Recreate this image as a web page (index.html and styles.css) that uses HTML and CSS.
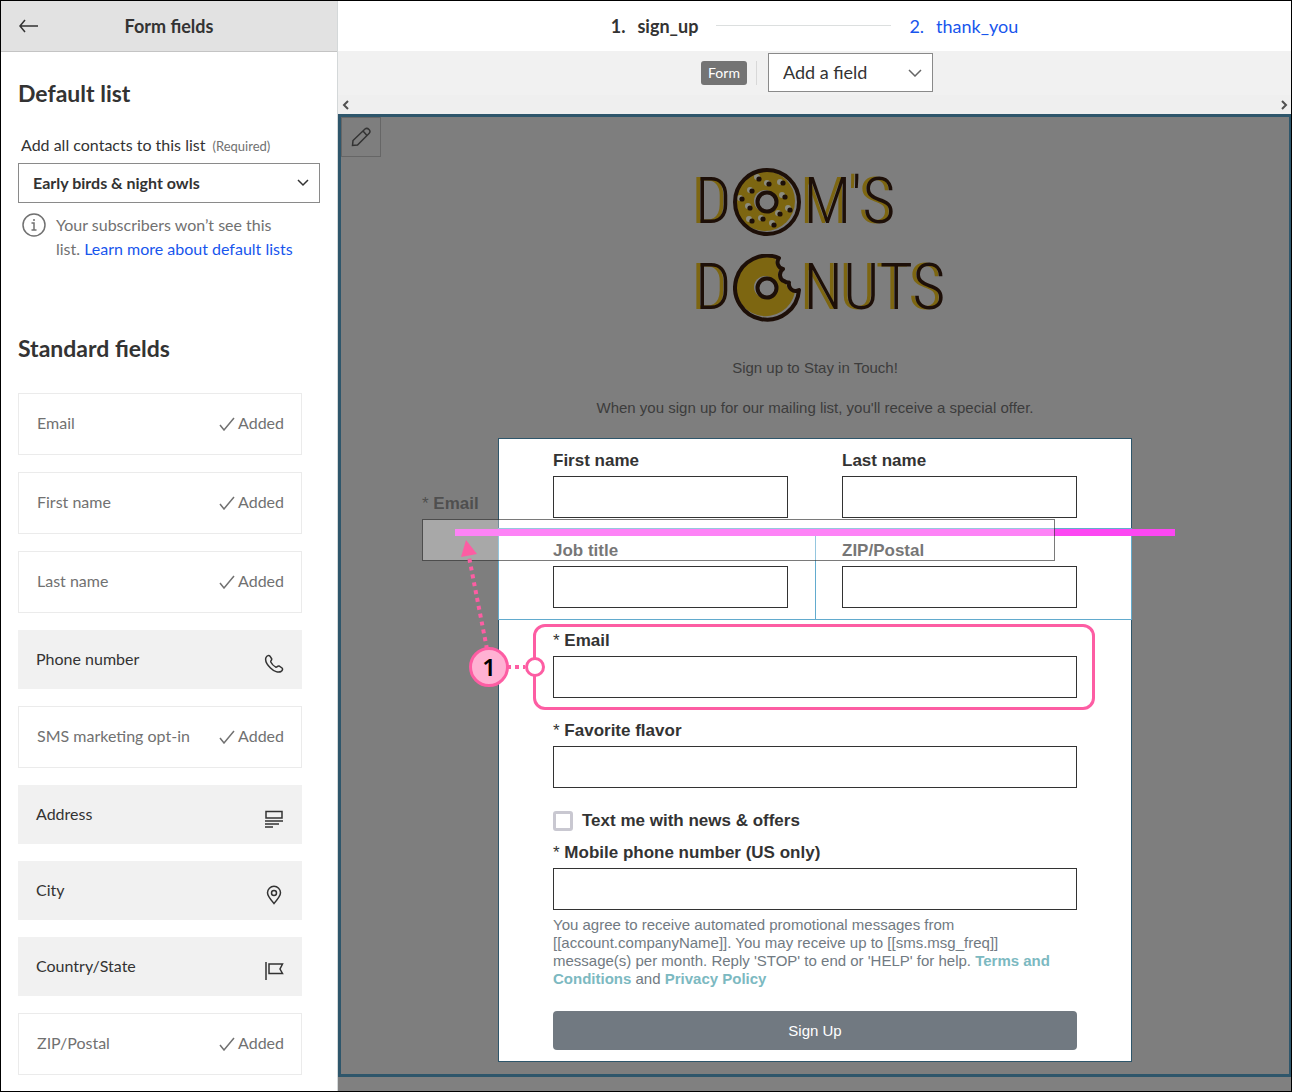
FILE: index.html
```html
<!DOCTYPE html>
<html lang="en">
<head>
    <meta charset="UTF-8">
    <meta name="viewport" content="width=device-width, initial-scale=1.0">
    <title>Form fields</title>
    <link rel="stylesheet" href="styles.css">
</head>
<body>
    <div class="app">
        <aside class="sidebar">
            <header class="sidebar-header">
                <button class="back" type="button" aria-label="Back">
                    <svg width="20" height="14" viewBox="0 0 20 14"><path d="M6 1L1 7l5 6M1 7h18"/></svg>
                </button>
                <h1>Form fields</h1>
            </header>

            <section class="default-list">
                <h2>Default list</h2>
                <label for="list">Add all contacts to this list <small>(Required)</small></label>
                <div class="select list-select">
                    <select id="list">
                        <option>Early birds &amp; night owls</option>
                    </select>
                    <svg width="12" height="8" viewBox="0 0 12 8"><path d="M1 1l5 5 5-5"/></svg>
                </div>
                <div class="info">
                    <svg width="24" height="24" viewBox="0 0 24 24"><circle cx="12" cy="12" r="11"/><path d="M9.500 10H12v7M9.500 17h5"/><circle class="dot" cx="12" cy="7" r="1"/></svg>
                    <p>Your subscribers won’t see this list. <a href="#">Learn more about default lists</a></p>
                </div>
            </section>

            <section class="standard">
                <h2>Standard fields</h2>
                <div class="cards">
                    <div class="card added"><span>Email</span><span class="status"><svg width="16" height="14" viewBox="0 0 16 14"><path d="M1 8l4 5L15 1"/></svg>Added</span></div>
                    <div class="card added"><span>First name</span><span class="status"><svg width="16" height="14" viewBox="0 0 16 14"><path d="M1 8l4 5L15 1"/></svg>Added</span></div>
                    <div class="card added"><span>Last name</span><span class="status"><svg width="16" height="14" viewBox="0 0 16 14"><path d="M1 8l4 5L15 1"/></svg>Added</span></div>
                    <button class="card" type="button">Phone number
                        <svg width="20" height="20" viewBox="0 0 20 20"><path d="M2 3.500C3 1.500 5 1 6 2.200L7.500 4.500C8.500 6 6.300 6.700 6.800 8C8 10.500 9.500 12 11.800 13.200C13 13.700 13.500 11.500 15 12L18 14C19 15 18.500 16.500 17 17.500C14.500 19 10 17.500 6.500 14C3 10.500 1 6 2 3.500Z"/></svg>
                    </button>
                    <div class="card added"><span>SMS marketing opt-in</span><span class="status"><svg width="16" height="14" viewBox="0 0 16 14"><path d="M1 8l4 5L15 1"/></svg>Added</span></div>
                    <button class="card" type="button">Address
                        <svg width="20" height="20" viewBox="0 0 20 20"><path d="M2 2.500h16v6.500H2zM1 12h18M1 15h14M1 18h8"/></svg>
                    </button>
                    <button class="card" type="button">City
                        <svg width="20" height="20" viewBox="0 0 20 20"><path d="M10 18.500C6 14 3.500 11 3.500 7.800a6.500 6.500 0 0 1 13 0C16.500 11 14 14 10 18.500z"/><circle cx="10" cy="8" r="2.500"/></svg>
                    </button>
                    <button class="card" type="button">Country/State
                        <svg width="20" height="20" viewBox="0 0 20 20"><path d="M2 1v18M5 3h13.500l-2.500 5 2.500 4.500H5z"/></svg>
                    </button>
                    <div class="card added"><span>ZIP/Postal</span><span class="status"><svg width="16" height="14" viewBox="0 0 16 14"><path d="M1 8l4 5L15 1"/></svg>Added</span></div>
                </div>
            </section>
        </aside>

        <main class="editor">
            <nav class="steps">
                <a class="current" href="#"><span>1.</span>sign_up</a>
                <span class="step-line"></span>
                <a href="#"><span>2.</span>thank_you</a>
            </nav>

            <div class="toolbar">
                <span class="tag">Form</span>
                <span class="divider"></span>
                <div class="select field-select">
                    <select aria-label="Add a field">
                        <option>Add a field</option>
                    </select>
                    <svg width="14" height="8" viewBox="0 0 14 8"><path d="M1 1l6 6 6-6"/></svg>
                </div>
            </div>
            <div class="scroller">
                <svg width="8" height="10" viewBox="0 0 8 10"><path d="M6 1L2 5l4 4"/></svg>
                <svg width="8" height="10" viewBox="0 0 8 10"><path d="M2 1l4 4-4 4"/></svg>
            </div>

            <div class="canvas">
                <button class="edit" type="button" aria-label="Edit">
                    <svg width="20" height="20" viewBox="0 0 20 20"><path d="M1.500 18.500L2 13.500 14 2Q16 .5 18 2.500T18 6.500L6.500 18zM12 4l4 4.500"/></svg>
                </button>

                <div class="page">
                    <div class="logo">
                        <div class="logo-row">
                            <span>D</span>
                            <svg width="68" height="68" viewBox="0 0 68 68">
                                <circle class="gap" cx="34" cy="34" r="32"/>
                                <circle class="dough" cx="32" cy="33" r="30"/>
                                <g class="light">
                                    <circle cx="24" cy="9" r="3"/><circle cx="34" cy="15" r="3"/><circle cx="47" cy="14" r="3"/><circle cx="17" cy="22" r="3"/><circle cx="49" cy="27" r="3"/><circle cx="7" cy="30" r="3"/><circle cx="15" cy="38" r="3"/><circle cx="55" cy="40" r="3"/><circle cx="45" cy="45" r="3"/><circle cx="16" cy="51" r="3"/><circle cx="28" cy="50" r="3"/><circle cx="39" cy="55" r="3"/>
                                </g>
                                <g class="sprinkle">
                                    <circle cx="26" cy="11" r="2.600"/><circle cx="36" cy="16" r="2.600"/><circle cx="50" cy="15" r="2.600"/><circle cx="19" cy="23" r="2.600"/><circle cx="52" cy="29" r="2.600"/><circle cx="9" cy="31" r="2.600"/><circle cx="17" cy="40" r="2.600"/><circle cx="57" cy="42" r="2.600"/><circle cx="47" cy="46" r="2.600"/><circle cx="19" cy="53" r="2.600"/><circle cx="30" cy="51" r="2.600"/><circle cx="41" cy="57" r="2.600"/>
                                </g>
                                <circle class="gap" cx="32" cy="33" r="11"/>
                                <circle class="ring" cx="34" cy="34" r="9.500"/>
                                <circle class="ring" cx="34" cy="34" r="32"/>
                            </svg>
                            <span>M'S</span>
                        </div>
                        <div class="logo-row">
                            <span>D</span>
                            <svg width="68" height="68" viewBox="0 0 68 68">
                                <path class="dough" d="M43 4C42 9 43 12 47 15C43 20 46 26 53 29C54 35 57 37 62 38A30 30 0 1 1 43 4z"/>
                                <circle class="gap" cx="32" cy="33" r="11"/>
                                <circle class="ring" cx="34" cy="34" r="9.500"/>
                                <path class="ring" d="M66 36A32 32 0 1 1 46 4C43 8 45 14 50 15C45 19 47 26 51 27Q54 29 56 28.500C55 34 60 39 66 36z"/>
                            </svg>
                            <span>NUTS</span>
                        </div>
                    </div>
                    <p class="intro">Sign up to Stay in Touch!</p>
                    <p class="intro">When you sign up for our mailing list, you'll receive a special offer.</p>

                    <form class="panel">
                        <div class="row">
                            <div class="field">
                                <label for="first">First name</label>
                                <input type="text" id="first">
                            </div>
                            <div class="field">
                                <label for="last">Last name</label>
                                <input type="text" id="last">
                            </div>
                        </div>
                        <div class="row target">
                            <div class="field">
                                <label for="job">Job title</label>
                                <input type="text" id="job">
                            </div>
                            <div class="field">
                                <label for="zip">ZIP/Postal</label>
                                <input type="text" id="zip">
                            </div>
                        </div>
                        <div class="field marked">
                            <label for="email"><i>*</i> Email</label>
                            <input type="email" id="email">
                            <span class="callout"></span>
                        </div>
                        <div class="field">
                            <label for="flavor"><i>*</i> Favorite flavor</label>
                            <input type="text" id="flavor">
                        </div>
                        <div class="check">
                            <input type="checkbox" id="sms">
                            <label for="sms">Text me with news &amp; offers</label>
                        </div>
                        <div class="field">
                            <label for="mobile"><i>*</i> Mobile phone number (US only)</label>
                            <input type="tel" id="mobile">
                            <p class="consent">You agree to receive automated promotional messages from [[account.companyName]]. You may receive up to [[sms.msg_freq]] message(s) per month. Reply 'STOP' to end or 'HELP' for help. <a href="#">Terms and Conditions</a> and <a href="#">Privacy Policy</a></p>
                        </div>
                        <button class="submit" type="button">Sign Up</button>

                        <!-- drop position and the field being dragged -->
                        <div class="drop-line"></div>
                        <div class="ghost">
                            <span><i>*</i> Email</span>
                            <div class="ghost-box"></div>
                        </div>

                        <!-- step marker -->
                        <svg class="pointer" width="90" height="160" viewBox="0 0 90 160">
                            <path class="dots" d="M32 110L14 18"/>
                            <path class="head" d="M11 1L6 18l16-3z"/>
                            <path class="dots" d="M52 128h18"/>
                            <circle class="end" cx="80" cy="128" r="8.500"/>
                        </svg>
                        <span class="marker">1</span>
                    </form>
                </div>
            </div>
        </main>
    </div>
</body>
</html>
```
FILE: styles.css
```css
* {
    margin: 0;
    padding: 0;
    box-sizing: border-box;
}

body {
    font-family: Lato, sans-serif;
    font-size: 16px;
    color: #333;
}

button, select, input {
    font: inherit;
    color: inherit;
}

svg {
    fill: none;
    stroke: #333;
    stroke-width: 1.5;
    flex: none;
}

a {
    color: #1856ed;
    text-decoration: none;
}

.app {
    display: grid;
    grid-template-columns: 337px 1fr;
    min-height: 100vh;
    border: 1px solid #000;
}

/* sidebar */
.sidebar {
    background: #fff;
    border-right: 1px solid #d4d8d9;
}

.sidebar-header {
    position: relative;
    display: flex;
    align-items: center;
    justify-content: center;
    height: 51px;
    background: #e2e2e2;
    border-bottom: 1px solid #c4c4c4;
}

.sidebar-header h1 {
    font-size: 18px;
    font-weight: 700;
}

.back {
    position: absolute;
    left: 18px;
    display: flex;
    background: none;
    border: none;
}

.default-list {
    padding: 27px 17px 0;
}

h2 {
    font-size: 23px;
    line-height: 28px;
    font-weight: 700;
}

.default-list label {
    display: block;
    margin: 26px 0 5px 3px;
    line-height: 24px;
}

.default-list small {
    font-size: 13px;
    color: #717171;
    margin-left: 3px;
}

.select {
    position: relative;
    display: flex;
    align-items: center;
}

.select select {
    width: 100%;
    height: 100%;
    padding: 0 14px 2px;
    appearance: none;
    background: #fff;
    border: 1px solid #8a8a8a;
    border-radius: 0;
}

.select svg {
    position: absolute;
    right: 11px;
    pointer-events: none;
}

.list-select {
    height: 40px;
    font-weight: 700;
}

.info {
    display: flex;
    gap: 10px;
    padding: 10px 26px 0 4px;
    line-height: 24px;
    color: #717171;
}

.info svg {
    stroke: #717171;
}

.info .dot {
    fill: #717171;
    stroke: none;
}

.standard {
    padding: 73px 35px 14px 17px;
}

.cards {
    display: flex;
    flex-direction: column;
    gap: 17px;
    margin-top: 31px;
}

.card {
    display: flex;
    align-items: center;
    justify-content: space-between;
    height: 59px;
    padding: 0 18px 2px;
    background: #f1f1f1;
    border: none;
}

.card > svg {
    margin-top: 10px;
}

.added {
    height: 62px;
    background: #fff;
    border: 1px solid #ebebeb;
    padding: 0 17px 4px 18px;
    color: #717171;
}

.status {
    display: flex;
    align-items: center;
    gap: 3px;
}

.status svg {
    stroke: #717171;
    margin-top: 4px;
}

/* editor */
.editor {
    display: flex;
    flex-direction: column;
    background: #808080;
}

.steps {
    display: flex;
    align-items: center;
    justify-content: center;
    gap: 18px;
    height: 50px;
    padding-bottom: 1px;
    background: #fff;
    font-size: 18px;
}

.steps a span {
    margin-right: 12px;
}

.steps .current {
    color: #333;
    font-weight: 700;
}

.step-line {
    width: 175px;
    height: 1px;
    background: #dcdfdf;
}

.toolbar {
    display: flex;
    align-items: center;
    justify-content: center;
    gap: 9px;
    height: 44px;
    padding: 0 0 1px 5px;
    background: #f1f1f1;
}

.tag {
    padding: 0 7px;
    font-size: 14px;
    line-height: 24px;
    color: #fff;
    background: #747474;
    border-radius: 3px;
}

.divider {
    width: 1px;
    height: 24px;
    background: #d8d8d8;
}

.field-select {
    width: 165px;
    height: 39px;
    margin-left: 2px;
    font-size: 18px;
}

.field-select svg {
    stroke: #666;
}

.scroller {
    display: flex;
    align-items: center;
    justify-content: space-between;
    height: 19px;
    padding: 0 3px 0 4px;
    background: #efefef;
}

.scroller svg {
    stroke: #505050;
    stroke-width: 2;
}

.canvas {
    position: relative;
    padding: 0 12px 12px;
    background: #7e7e7e;
    border: 3px solid #2e566b;
    border-right-width: 2px;
}

.edit {
    position: absolute;
    top: 0;
    left: 0;
    display: flex;
    align-items: center;
    justify-content: center;
    width: 40px;
    height: 40px;
    background: none;
    border: 1px solid #666;
}

.page {
    max-width: 634px;
    margin: 0 auto;
    font-family: "Liberation Sans", Arial, sans-serif;
}

.logo {
    display: flex;
    flex-direction: column;
    gap: 18px;
    width: 240px;
    margin: 0 auto;
    padding: 51px 0 36px;
}

.logo-row {
    display: flex;
    align-items: center;
    gap: 2px;
    height: 68px;
    font-family: "Liberation Sans Narrow", "Roboto Condensed", "DejaVu Sans Condensed", sans-serif;
    font-size: 64px;
    font-weight: 300;
    line-height: 68px;
    color: #1d0f08;
    text-shadow: -4px 0 #7d6611;
}

.logo .dough {
    fill: #7d6611;
    stroke: none;
}

.logo .gap {
    fill: #7e7e7e;
    stroke: none;
}

.logo .light {
    fill: #8c8c80;
    stroke: none;
}

.logo .sprinkle {
    fill: #1d0f08;
    stroke: none;
}

.logo .ring {
    stroke: #1d0f08;
    stroke-width: 4;
    stroke-linejoin: round;
}

.intro {
    margin-bottom: 20px;
    font-size: 15px;
    line-height: 20px;
    text-align: center;
    color: #3c3c3c;
}

.panel {
    position: relative;
    padding: 0 54px 11px;
    background: #fff;
    border: 1px solid #2e566b;
}

.row {
    display: grid;
    grid-template-columns: 1fr 1fr;
    gap: 54px;
}

.target {
    position: relative;
    margin: 0 -54px;
    padding: 0 54px;
    outline: 1px solid #62abce;
}

.target::before {
    content: "";
    position: absolute;
    top: 0;
    bottom: 0;
    left: 50%;
    width: 1px;
    background: #62abce;
}

.field {
    padding: 12px 0 11px;
}

.field label, .check label, .ghost {
    font-size: 17px;
    font-weight: 700;
    line-height: 20px;
}

.field label {
    display: block;
    margin-bottom: 5px;
}

i {
    font-style: normal;
    font-weight: 400;
}

.field input {
    display: block;
    width: 100%;
    height: 42px;
    padding: 0 10px;
    background: #fff;
    border: 1px solid #333;
}

.marked {
    position: relative;
}

.callout {
    position: absolute;
    top: 5px;
    right: -18px;
    bottom: -1px;
    left: -20px;
    border: 3px solid #fd5da3;
    border-radius: 12px;
    pointer-events: none;
}

.check {
    display: flex;
    align-items: center;
    gap: 9px;
    padding-top: 12px;
}

.check input {
    width: 20px;
    height: 20px;
    appearance: none;
    background: #fff;
    border: 3px solid #c9c8d1;
    border-radius: 3px;
}

.consent {
    margin-top: 6px;
    font-size: 15px;
    line-height: 18px;
    color: #717a82;
}

.consent a {
    color: #7cb9c1;
    font-weight: 700;
}

.submit {
    display: block;
    width: 100%;
    height: 39px;
    margin-top: 12px;
    font-size: 15px;
    color: #fff;
    background: #717981;
    border: none;
    border-radius: 4px;
}

/* overlays on the form */
.drop-line {
    position: absolute;
    top: 90px;
    left: -44px;
    width: 720px;
    height: 7px;
    background: #fc47f2;
}

.ghost {
    position: absolute;
    top: 55px;
    left: -77px;
    width: 633px;
    color: rgba(51, 51, 51, 0.65);
}

.ghost-box {
    height: 42px;
    margin-top: 5px;
    background: rgba(255, 255, 255, 0.33);
    background-clip: padding-box;
    border: 1px solid rgba(51, 51, 51, 0.65);
}

.pointer {
    position: absolute;
    top: 100px;
    left: -44px;
}

.pointer .dots {
    stroke: #fd5da3;
    stroke-width: 4;
    stroke-dasharray: 4 4;
}

.pointer .head {
    fill: #fd5da3;
    stroke: none;
}

.pointer .end {
    fill: #fff;
    stroke: #fd5da3;
    stroke-width: 3;
}

.marker {
    position: absolute;
    top: 208px;
    left: -30px;
    width: 40px;
    height: 40px;
    font-family: "Noto Sans", sans-serif;
    font-size: 24px;
    font-weight: 600;
    line-height: 34px;
    text-align: center;
    color: #000;
    background: #ffb1d3;
    border: 3px solid #fd5da3;
    border-radius: 50%;
}
```
